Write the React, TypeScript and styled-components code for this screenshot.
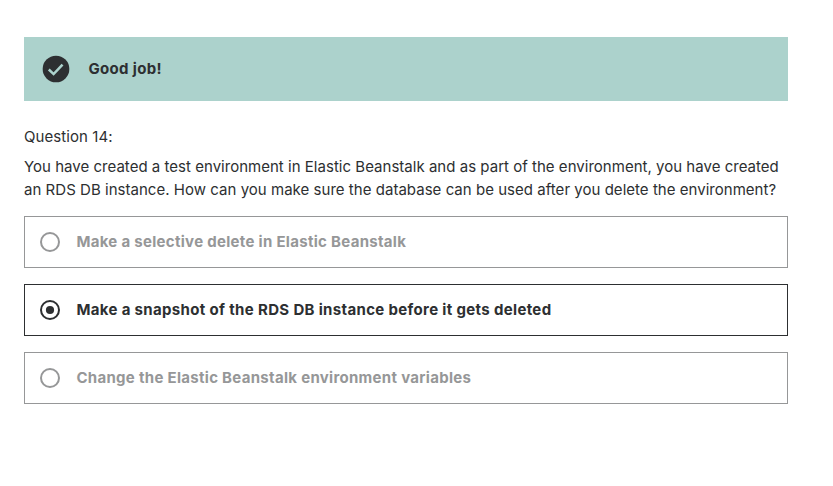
import React from "react";
import styled, { createGlobalStyle } from "styled-components";

const GlobalStyle = createGlobalStyle`
  *, *::before, *::after { box-sizing: border-box; }
  body { margin: 0; background: #fff; font-family: Inter, sans-serif; font-size: 15px; }
`;

const Page = styled.main`
  width: 833px;
  height: 486px;
  padding: 37px 45px 0 24px;
  color: #2d2f31;
`;

const Banner = styled.div`
  display: flex;
  align-items: center;
  gap: 16px;
  height: 64px;
  padding-left: 16px;
  background: #acd2cc;
`;

const BoldText = styled.strong<{ $spacing: number }>`
  padding: 0 0 2px 0.4px;
  font-weight: 700;
  letter-spacing: ${(p) => p.$spacing}px;
  white-space: nowrap;
`;

const QuestionNumber = styled.div`
  margin-top: 25px;
  line-height: 22px;
  letter-spacing: 0.08px;
`;

const Prompt = styled.p`
  margin: 7px 0 0;
  line-height: 23px;
`;

const Line = styled.span<{ $spacing: number }>`
  display: block;
  white-space: nowrap;
  letter-spacing: ${(p) => p.$spacing}px;
`;

const Options = styled.div`
  display: flex;
  flex-direction: column;
  gap: 16px;
  margin-top: 15px;
`;

const Option = styled.label<{ $selected?: boolean }>`
  display: flex;
  align-items: center;
  gap: 16px;
  height: 52px;
  padding-left: 15px;
  border: 1px solid ${(p) => (p.$selected ? "#2d2f31" : "#969798")};
  color: ${(p) => (p.$selected ? "#2d2f31" : "#969798")};
`;

const CheckIcon = () => (
  <svg width="32" height="32" viewBox="0 0 24 24">
    <circle cx="12" cy="12" r="10" fill="currentColor" />
    <path
      d="M6.6 12.4 10.2 15.8 16.9 8.7"
      fill="none"
      stroke="#acd2cc"
      strokeWidth="1.9"
    />
  </svg>
);

const Radio = ({ selected }: { selected?: boolean }) => (
  <svg width="20" height="20" viewBox="0 0 20 20">
    <circle cx="10" cy="10" r="9" fill="none" stroke="currentColor" strokeWidth="2" />
    {selected && <circle cx="10" cy="10" r="4.1" fill="currentColor" />}
  </svg>
);

const answers = [
  { text: "Make a selective delete in Elastic Beanstalk", spacing: 0.3 },
  { text: "Make a snapshot of the RDS DB instance before it gets deleted", spacing: 0.34, selected: true },
  { text: "Change the Elastic Beanstalk environment variables", spacing: 0.3 },
];

export default function App() {
  return (
    <>
      <GlobalStyle />
      <Page>
        <Banner>
          <CheckIcon />
          <BoldText $spacing={0.35}>Good job!</BoldText>
        </Banner>
        <QuestionNumber>Question 14:</QuestionNumber>
        <Prompt>
          <Line $spacing={0.022}>You have created a test environment in Elastic Beanstalk and as part of the environment, you have created</Line>
          <Line $spacing={0.03}>an RDS DB instance. How can you make sure the database can be used after you delete the environment?</Line>
        </Prompt>
        <Options>
          {answers.map(({ text, spacing, selected }) => (
            <Option key={text} $selected={selected}>
              <Radio selected={selected} />
              <BoldText $spacing={spacing}>{text}</BoldText>
            </Option>
          ))}
        </Options>
      </Page>
    </>
  );
}
